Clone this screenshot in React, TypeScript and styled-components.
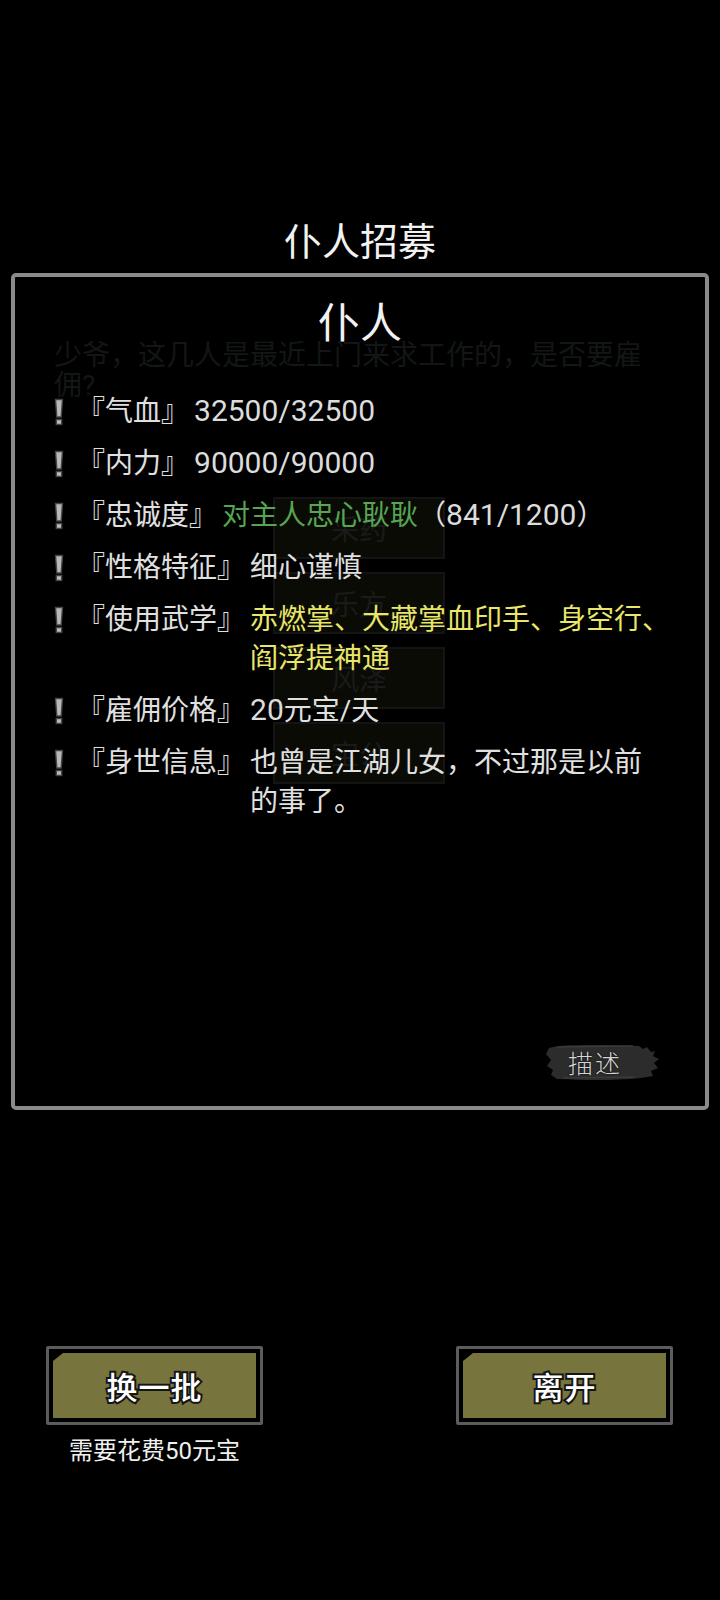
import React from 'react';
import styled, { createGlobalStyle } from 'styled-components';

const Global = createGlobalStyle`
  html, body {
    margin: 0;
    padding: 0;
    background: #000;
  }
  body {
    font-family: Roboto, "Noto Sans CJK SC", sans-serif;
    text-spacing-trim: space-all;
  }
`;

const Page = styled.div`
  position: relative;
  width: 720px;
  height: 1600px;
  background: #000;
  color: #e4e4e4;
  overflow: hidden;
  padding-top: 219px;
  box-sizing: border-box;
`;

// the page under the dark overlay, barely visible
const Under = styled.div`
  position: absolute;
  inset: 0;
  z-index: 0;
  pointer-events: none;
`;

const UnderText = styled.div`
  position: absolute;
  left: 54px;
  top: 341px;
  width: 620px;
  font-size: 28px;
  line-height: 30px;
  color: #121616;
`;

const UnderList = styled.div`
  position: absolute;
  left: 273px;
  top: 497px;
  display: flex;
  flex-direction: column;
  gap: 13px;
`;

const UnderButton = styled.div`
  width: 168px;
  height: 58px;
  border: 2px solid #141414;
  background: #0b0b06;
  display: flex;
  align-items: center;
  justify-content: center;
  font-size: 28px;
  color: #1a1a1a;
`;

const Title = styled.h1`
  position: relative;
  z-index: 1;
  margin: 0;
  text-align: center;
  font-size: 38px;
  line-height: 46px;
  font-weight: 400;
  color: #f2f2f2;
`;

const Panel = styled.div`
  position: relative;
  z-index: 1;
  margin: 8px 11px 0 11px;
  height: 837px;
  box-sizing: border-box;
  border: 4px solid #8a8a8a;
  border-radius: 5px;
  display: flex;
  flex-direction: column;
`;

const PanelHead = styled.div`
  margin-top: 22px;
  text-align: center;
  font-size: 42px;
  line-height: 50px;
  color: #f2f2f2;
`;

const Rows = styled.div`
  margin-top: 43px;
  display: flex;
  flex-direction: column;
  gap: 13px;
`;

const Row = styled.div`
  display: flex;
  align-items: flex-start;
  font-size: 28px;
  line-height: 39px;
  color: #e0e0e0;
`;

const Mark = styled.div`
  flex: none;
  width: 16px;
  height: 39px;
  margin-left: 36px;
  margin-right: 10px;
  display: flex;
  align-items: center;
  justify-content: center;
`;

const Label = styled.span`
  flex: none;
  padding-right: 5px;
`;

const Value = styled.span<{ $tone?: 'green' | 'yellow' }>`
  width: 430px;
  color: ${p => (p.$tone === 'green' ? '#55a552' : p.$tone === 'yellow' ? '#e9e66a' : '#e0e0e0')};
`;

const Num = styled.span`
  font-size: 30px;
  line-height: 1;
  color: #dcdcdc;
`;

const Green = styled.span`
  color: #55a552;
`;

const Spacer = styled.div`
  flex: 1;
`;

const Brush = styled.div`
  position: relative;
  align-self: flex-end;
  margin: 0 44px 23px 0;
  width: 118px;
  height: 43px;
  display: flex;
  align-items: center;
  justify-content: center;
`;

const BrushBack = styled.svg`
  position: absolute;
  inset: 0;
`;

const BrushText = styled.span`
  position: relative;
  margin-left: -14px;
  font-family: "Noto Sans CJK SC", sans-serif;
  font-size: 25px;
  font-weight: 300;
  letter-spacing: 2px;
  color: #d4d4d4;
  text-shadow: 0 0 2px #000;
`;

const Buttons = styled.div`
  position: relative;
  z-index: 1;
  margin-top: 236px;
  padding: 0 47px 0 46px;
  display: flex;
  justify-content: space-between;
  align-items: flex-start;
`;

const ButtonCol = styled.div`
  display: flex;
  flex-direction: column;
  align-items: center;
`;

const Button = styled.button`
  width: 217px;
  height: 79px;
  padding: 4px;
  box-sizing: border-box;
  border: 3px solid #5c5c5c;
  border-radius: 2px;
  background: #000;
  cursor: pointer;
  display: flex;
`;

const ButtonFace = styled.div`
  flex: 1;
  background: #78743d;
  clip-path: polygon(10px 0, 100% 0, 100% 100%, 0 100%, 0 8px);
  display: flex;
  align-items: center;
  justify-content: center;
  font-family: "Noto Sans CJK SC", sans-serif;
  font-size: 31px;
  font-weight: 500;
  color: #fff;
  -webkit-text-stroke: 4px #151515;
  paint-order: stroke fill;
  letter-spacing: 1px;
`;

const Cost = styled.div`
  margin-top: 12px;
  font-size: 24px;
  line-height: 28px;
  color: #f0f0f0;
`;

const Bang = () => (
  <svg width="12" height="28" viewBox="0 0 12 28">
    <path d="M2.5 1.5 H9.5 L8.2 19 H3.8 Z" fill="#b8b8b8" stroke="#454545" strokeWidth="1.4" strokeLinejoin="round" />
    <rect x="3.3" y="21.5" width="5.4" height="5" fill="#b8b8b8" stroke="#454545" strokeWidth="1.4" />
  </svg>
);

type Item = { label: string; value: React.ReactNode; tone?: 'green' | 'yellow' };

const items: Item[] = [
  { label: '『气血』', value: <Num>32500/32500</Num> },
  { label: '『内力』', value: <Num>90000/90000</Num> },
  { label: '『忠诚度』', value: <><Green>对主人忠心耿耿</Green>（<Num>841/1200</Num>）</> },
  { label: '『性格特征』', value: '细心谨慎' },
  { label: '『使用武学』', value: '赤燃掌、大藏掌血印手、身空行、阎浮提神通', tone: 'yellow' },
  { label: '『雇佣价格』', value: <><Num>20</Num>元宝/天</> },
  { label: '『身世信息』', value: <>也曾是江湖儿女，不过那是以前<br />的事了。</> },
];

export default function App() {
  return (
    <Page>
      <Global />
      <Under>
        <UnderText>少爷，这几人是最近上门来求工作的，是否要雇佣?</UnderText>
        <UnderList>
          {['采药', '乐方', '风泽', '宝公'].map(t => (
            <UnderButton key={t}>{t}</UnderButton>
          ))}
        </UnderList>
      </Under>

      <Title>仆人招募</Title>

      <Panel>
        <PanelHead>仆人</PanelHead>
        <Rows>
          {items.map(it => (
            <Row key={it.label}>
              <Mark><Bang /></Mark>
              <Label>{it.label}</Label>
              <Value $tone={it.tone}>{it.value}</Value>
            </Row>
          ))}
        </Rows>
        <Spacer />
        <Brush>
          <BrushBack viewBox="0 0 118 43" width="118" height="43">
            <path
              d="M6 8 C20 4 60 5 96 6 L100 9 L104 7 L108 12 L112 11 L110 16 L116 19 L111 23 L115 28 L108 31 L110 36 L98 38 C70 41 40 40 14 39 L8 35 L10 30 L4 26 L8 20 L3 14 Z"
              fill="#2c2c2c"
            />
            <path d="M14 7 L90 6 M20 38 L92 37" stroke="#3a3a3a" strokeWidth="1.5" fill="none" />
          </BrushBack>
          <BrushText>描述</BrushText>
        </Brush>
      </Panel>

      <Buttons>
        <ButtonCol>
          <Button><ButtonFace>换一批</ButtonFace></Button>
          <Cost>需要花费50元宝</Cost>
        </ButtonCol>
        <ButtonCol>
          <Button><ButtonFace>离开</ButtonFace></Button>
        </ButtonCol>
      </Buttons>
    </Page>
  );
}
